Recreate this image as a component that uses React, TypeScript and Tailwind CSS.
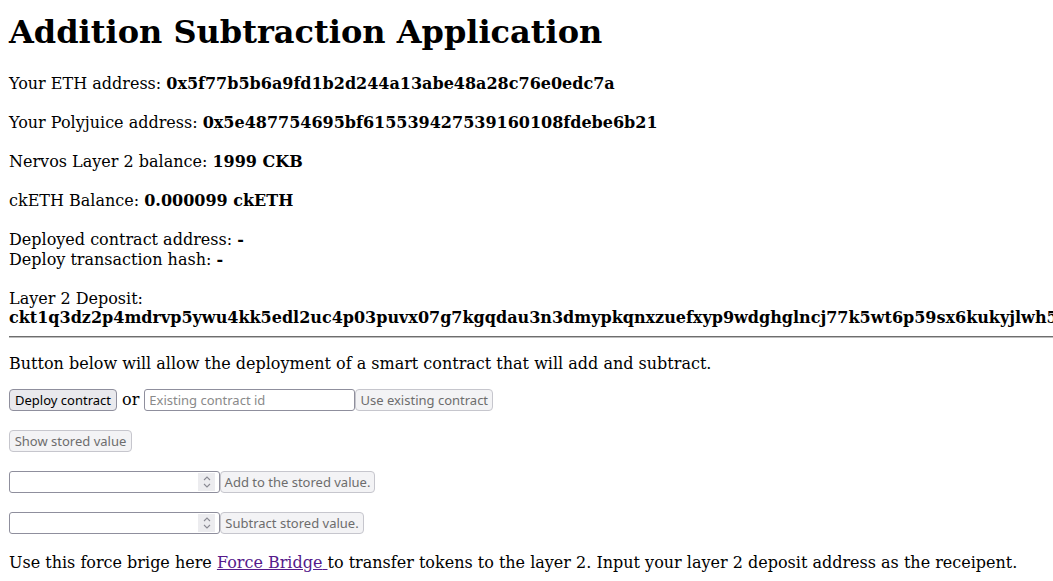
import React from "react";

function Btn({ children, width, disabled }: { children: React.ReactNode; width: string; disabled?: boolean }) {
  return (
    <button
      disabled={disabled}
      className={
        "h-[21.5px] shrink-0 rounded-[4px] border pt-[1px] text-center font-['Noto_Sans',sans-serif] text-[13px] leading-[18px] " +
        width +
        (disabled
          ? " border-[#c6c6cd] bg-[#f3f3f5] text-[#6d6d6d]"
          : " border-[#8f8f9d] bg-[#e9e9ed] text-black")
      }
    >
      {children}
    </button>
  );
}

function NumberBox() {
  return (
    <div className="flex h-[21.5px] w-[211px] shrink-0 items-center justify-end rounded-[3px] border border-[#8f8f9d] bg-white pr-[4px]">
      <div className="flex h-[18px] w-[17px] items-center justify-center bg-[#ececef]">
        <svg width="10" height="14" viewBox="0 0 10 14" fill="none" stroke="#8a8a93" strokeWidth="1.1">
          <path d="M2 5 L5 2 L8 5" />
          <path d="M2 9 L5 12 L8 9" />
        </svg>
      </div>
    </div>
  );
}

export default function App() {
  return (
    <div className="min-h-screen overflow-hidden bg-white pl-[9px] font-['DejaVu_Serif',serif] text-base leading-[19.5px] text-black">
      <h1 className="mt-[14px] text-[32px] font-bold leading-[37px]">Addition Subtraction Application</h1>

      <div className="mt-[23px] whitespace-nowrap">
        Your ETH address: <b>0x5f77b5b6a9fd1b2d244a13abe48a28c76e0edc7a</b>
        <br />
        <br />
        Your Polyjuice address: <b>0x5e487754695bf615539427539160108fdebe6b21</b>
        <br />
        <br />
        Nervos Layer 2 balance: <b>1999 CKB</b>
        <br />
        <br />
        ckETH Balance: <b>0.000099 ckETH</b>
        <br />
        <br />
        Deployed contract address: <b>-</b>
        <br />
        Deploy transaction hash: <b>-</b>
        <br />
        <br />
        Layer 2 Deposit:
        <br />
        <b>ckt1q3dz2p4mdrvp5ywu4kk5edl2uc4p03puvx07g7kgqdau3n3dmypkqnxzuefxyp9wdghglncj77k5wt6p59sx6kukyjlwh5xz3k8t</b>
      </div>

      <hr className="my-2 h-0 border-0 border-t border-b border-t-[#6e6e6e] border-b-[#bdbdbd]" />

      <p className="mt-4 mb-4">Button below will allow the deployment of a smart contract that will add and subtract.</p>

      <div className="mb-[19.5px] flex h-[21.5px] items-center">
        <Btn width="w-[108px]">Deploy contract</Btn>
        <span className="mx-[5px]">or</span>
        <input
          placeholder="Existing contract id"
          className="h-[21.5px] w-[211px] shrink-0 rounded-[3px] border border-[#8f8f9d] bg-white px-[4px] pt-[1px] font-['Noto_Sans',sans-serif] text-[13px] placeholder:text-[#8a8a8a] focus:outline-none"
        />
        <Btn width="w-[138px]" disabled>
          Use existing contract
        </Btn>
      </div>

      <div className="mb-[19.5px] flex h-[21.5px] items-center">
        <Btn width="w-[123px]" disabled>
          Show stored value
        </Btn>
      </div>

      <div className="mb-[19.5px] flex h-[21.5px] items-center">
        <NumberBox />
        <Btn width="w-[155px]" disabled>
          Add to the stored value.
        </Btn>
      </div>

      <div className="mb-[19.5px] flex h-[21.5px] items-center">
        <NumberBox />
        <Btn width="w-[144px]" disabled>
          Subtract stored value.
        </Btn>
      </div>

      <p className="whitespace-nowrap">
        Use this force brige here{" "}
        <a href="#" className="text-[#551a8b] underline">
          Force Bridge{" "}
        </a>
        to transfer tokens to the layer 2. Input your layer 2 deposit address as the receipent.
      </p>
    </div>
  );
}
